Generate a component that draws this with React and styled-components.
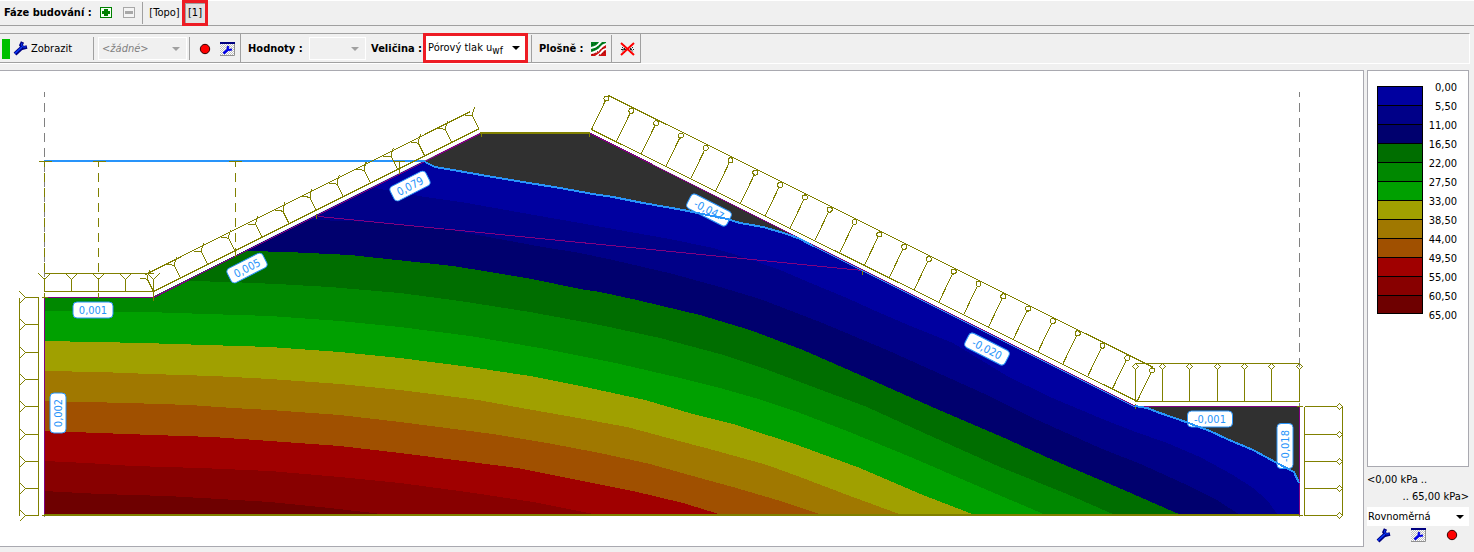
import styled, { createGlobalStyle, css } from 'styled-components'

const GlobalStyle = createGlobalStyle`
  * { box-sizing: border-box; }
  body {
    margin: 0;
    background: #f0f0f0;
    color: #000;
    font-family: "DejaVu Sans Condensed", "DejaVu Sans", "Noto Sans", sans-serif;
    font-size: 11px;
    line-height: 16px;
  }
  button, select { font: inherit; color: inherit; }
`

const OLIVE = '#808000'
const PURPLE = '#800080'
const WATER = '#2894fa'

/* ---------- toolbars ---------- */

const Page = styled.div`
  display: flex;
  flex-direction: column;
`

const StageBar = styled.header`
  display: flex;
  align-items: center;
  height: 26px;
  padding-left: 4px;
  border-top: 1px solid #fff;
  border-bottom: 1px solid #a0a0a0;
`

const ViewBar = styled.div`
  display: flex;
  height: 31px;
  margin: 7px 4px 6px 0;
  border-top: 1px solid #a0a0a0;
  border-right: 1px solid #fff;
  border-bottom: 1px solid #fff;
`

const Group = styled.div`
  display: flex;
  align-items: center;
  padding-top: 1px;
  border-right: 1px solid #a0a0a0;
  border-bottom: 1px solid #a0a0a0;
`

const Caption = styled.label`
  font-weight: bold;
  white-space: nowrap;
  width: ${p => p.$width}px;
`

const Divider = styled.span`
  align-self: stretch;
  width: 1px;
  margin: ${p => p.$margin || '2px 4px'};
  background: #a0a0a0;
`

const ToolButton = styled.button`
  display: flex;
  align-items: center;
  justify-content: center;
  gap: 3px;
  height: 22px;
  padding: 0 ${p => p.$pad || 0}px;
  border: 0;
  background: none;
  white-space: nowrap;
  svg { display: block; flex: none; }
`

const Marked = styled.div`
  display: flex;
  align-self: stretch;
  border: 3px solid #ed1c24;
  ${p => p.$combo && css`margin: -2px 3px -1px 0;`}
  ${p => p.$stage && css`margin: -1px 0;`}
`

const StageButton = styled(ToolButton)`
  height: 20px;
  width: ${p => p.$active ? 20 : 35}px;
  background: ${p => p.$active ? '#e3e3e3' : 'none'};
  box-shadow: ${p => p.$active ? 'inset 1px 1px 0 #a0a0a0' : 'none'};
`

const ActiveMark = styled.span`
  width: 8px;
  height: 20px;
  margin-left: 2px;
  background: #00c000;
`

const Combo = styled.div`
  position: relative;
  display: flex;
  align-items: center;
  width: ${p => p.$width};
  height: ${p => p.$height || 23}px;
  background: ${p => p.$white ? '#fff' : '#f0f0f0'};
  border: ${p => p.$white ? '0' : '1px solid #fff'};
  color: ${p => p.$white ? '#000' : '#808080'};
  svg {
    position: absolute;
    right: ${p => p.$white ? 5 : 6}px;
    pointer-events: none;
  }
`

const Select = styled.select`
  appearance: none;
  width: 100%;
  height: 100%;
  padding: 0 16px 0 ${p => p.$pad || 3}px;
  border: 0;
  background: transparent;
  font-style: ${p => p.$italic ? 'italic' : 'normal'};
  opacity: 1;
`

const ComboText = styled.span`
  position: absolute;
  left: 2px;
  pointer-events: none;
  white-space: nowrap;
  sub { font-size: 10px; line-height: 0; vertical-align: -3px; }
`

/* ---------- work area ---------- */

const Work = styled.main`
  display: grid;
  grid-template-columns: minmax(0, 1fr) 102px;
  gap: 3px;
  padding-right: 5px;
`

const Canvas = styled.section`
  background: #fff;
  border: 1px solid #a9a9b0;
  border-left: 0;
  svg { display: block; width: 100%; height: auto; }
`

const Side = styled.aside`
  display: flex;
  flex-direction: column;
`

const Legend = styled.div`
  flex: 1;
  display: flex;
  justify-content: space-between;
  padding: 7px 11px 0 9px;
  background: #fff;
  border: 1px solid #a9a9b0;
`

const Swatches = styled.div`
  margin-top: 8px;
  width: 46px;
`

const Swatch = styled.div`
  height: 19px;
  border: 1px solid #000;
  border-bottom-width: ${p => p.$last ? 1 : 0}px;
  background: ${p => p.$color};
`

const Values = styled.div`
  text-align: right;
  line-height: 19px;
`

const Range = styled.div`
  padding: 4px 0 2px;
  line-height: 17px;
  white-space: nowrap;
  div + div { text-align: right; }
`

const SideTools = styled.div`
  display: flex;
  justify-content: space-between;
  padding: 1px 11px 4px 9px;
  ${ToolButton} { height: 16px; }
`

/* ---------- icons ---------- */

const Wrench = () => (
  <svg width="15" height="15" viewBox="0 0 15 15">
    <g fill="none">
      <path d="M2 13L9 6.500" stroke="#000080" strokeWidth="4" />
      <path d="M9.500 1L8 4L10 7L14 6" stroke="#000080" strokeWidth="3.500" />
      <path d="M2 12.500L9 6" stroke="#0a3cff" strokeWidth="1.500" />
      <path d="M9 2L8.500 4L10 6L13 6" stroke="#0a3cff" />
    </g>
  </svg>
)

const Setup = () => (
  <svg width="15" height="14" viewBox="0 0 15 14">
    <defs>
      <pattern id="check" width="2" height="2" patternUnits="userSpaceOnUse">
        <rect width="2" height="2" fill="#fff" />
        <rect width="1" height="1" fill="#c0c0c0" />
        <rect x="1" y="1" width="1" height="1" fill="#c0c0c0" />
      </pattern>
    </defs>
    <rect width="15" height="14" fill="url(#check)" />
    <path d="M14.500 2V13.500H0" fill="none" stroke="#909090" />
    <rect width="15" height="2" fill="#000080" />
    <g fill="none" stroke="#0000e8">
      <path d="M3.500 11.500L8 7.500" strokeWidth="2.500" />
      <path d="M8.500 4L7.500 6L9 8L12 7.500" strokeWidth="2" />
    </g>
  </svg>
)

const Dot = () => (
  <svg width="12" height="12" viewBox="0 0 12 12">
    <circle cx="6" cy="6" r="4.700" fill="#f00" stroke="#300" />
  </svg>
)

const Box = ({ color, plus }) => (
  <svg width="12" height="12" viewBox="0 0 12 12" shapeRendering="crispEdges">
    <rect x=".5" y=".5" width="11" height="10" rx="1" fill={plus ? '#f4fff4' : '#f4f4f4'} stroke={color} />
    <path d={plus ? 'M2 4h2V2h4v2h2v3H8v2H4V7H2z' : 'M2 4h8v3H2z'} fill={color} />
  </svg>
)

const Arrow = ({ color = '#000' }) => (
  <svg width="8" height="4" viewBox="0 0 8 4">
    <path d="M0 0h8L4 4z" fill={color} />
  </svg>
)

const Zones = () => (
  <svg width="15" height="14" viewBox="0 0 15 14">
    <rect width="15" height="14" fill="#fff" />
    <path d="M0 0H8Q6 4 0 5z" fill="#008020" />
    <path d="M0 10V7Q5 6 7 4T11 0H15V1Q11 2 9 5T0 10z" fill="#008020" />
    <path d="M0 14V12Q7 11 9 8T15 3V6Q11 7 10 9T4 14z" fill="#d01010" />
    <path d="M7 14Q11 12 12 10T15 8V14z" fill="#d01010" />
    <path d="M1 13L14 5M8 13L14 10" stroke="#600000" strokeDasharray="1 2" />
    <path d="M1 9L12 1M1 3L6 1" stroke="#004000" strokeDasharray="1 2" />
  </svg>
)

const Crossed = () => (
  <svg width="15" height="14" viewBox="0 0 15 14">
    <path d="M1 7.500H14M4.500 3V11M10.500 3V11M2 5L4 7L2 10M13 5L11 7L13 10" stroke="#222" fill="none" strokeDasharray="2 1" />
    <path d="M1 1L14 13M14 1L1 13" stroke="#f00" strokeWidth="2" />
  </svg>
)

/* ---------- cross-section ---------- */

const WATER_TABLE = '425,162 435,167 453,170 487,176 523,182 560,188 593,194 613,197 643,203 683,210 727,219 740,223 763,227 787,234 800,239 813,246'
const SEEPAGE = '813,246 863,271 1135,407'
const WATER_TOE = '1135,406 1147,408 1160,413 1183,421 1210,431 1227,439 1253,450 1277,463 1292,471 1294,472 1299,483'

// upper edge of every pressure zone, from the water table down
const zones = [
  { color: '#0000a0', edge: `44,162 ${WATER_TABLE} ${SEEPAGE} ${WATER_TOE}` },
  { color: '#000088', edge: '44,180 375,188 425,197 467,203 517,212 580,223 630,232 670,239 713,248 740,256 780,270 813,284 847,298 880,313 913,327 953,343 1007,376 1050,397 1100,418 1133,431 1167,443 1200,457 1233,475 1253,488 1267,500 1278,515' },
  { color: '#00006e', edge: '44,222 310,220 350,221 400,224 446,229 483,236 537,246 580,253 613,260 673,274 720,287 760,299 820,322 887,350 927,368 987,395 1033,418 1100,448 1143,465 1187,485 1217,500 1240,515' },
  { color: '#006e00', edge: '44,251 248,251 287,252 330,254 350,255 397,260 453,266 490,272 532,279 580,289 600,292 637,300 700,315 750,330 803,350 867,378 930,406 1000,436 1053,460 1117,487 1181,515' },
  { color: '#008800', edge: '44,281 190,281 230,282 277,284 330,287 400,293 460,301 530,312 600,325 660,338 720,354 760,367 800,382 867,407 933,437 1000,467 1067,494 1115,515' },
  { color: '#00a000', edge: '44,311 147,312 207,314 270,316 340,321 400,327 470,336 540,348 620,364 680,378 720,388 762,400 800,413 847,431 913,458 980,487 1046,515' },
  { color: '#a0a000', edge: '44,341 96,342 143,343 207,345 270,347 340,352 400,358 470,367 530,376 590,388 645,400 693,414 733,424 770,436 800,446 860,468 923,495 975,515' },
  { color: '#a07800', edge: '44,371 100,372 150,374 213,376 270,379 340,384 400,390 440,395 478,400 527,409 567,416 627,427 683,442 717,451 767,465 800,477 850,496 902,515' },
  { color: '#a05000', edge: '44,401 128,403 190,405 233,408 270,410 340,415 400,422 493,434 547,443 600,453 650,464 700,478 733,487 777,500 822,515' },
  { color: '#a00000', edge: '44,431 100,433 153,435 213,437 270,441 340,446 400,453 463,461 517,468 567,478 633,491 683,503 722,515' },
  { color: '#880000', edge: '44,461 87,463 133,466 200,468 270,471 340,477 400,483 467,492 533,502 598,515' },
  { color: '#6e0000', edge: '44,491 100,494 167,496 220,499 270,502 330,508 390,515' },
]

const levels = ['0,00', '5,50', '11,00', '16,50', '22,00', '27,50', '33,00', '38,50', '44,00', '49,50', '55,00', '60,50', '65,00']

const flowLabels = [
  { text: '0,001', x: 93, y: 310, turn: 0 },
  { text: '0,002', x: 58, y: 413, turn: -90 },
  { text: '0,005', x: 247, y: 268, turn: -27 },
  { text: '0,079', x: 410, y: 186, turn: -27 },
  { text: '-0,047', x: 709, y: 210, turn: 27 },
  { text: '-0,020', x: 987, y: 349, turn: 27 },
  { text: '-0,001', x: 1210, y: 419, turn: 0 },
  { text: '-0,018', x: 1285, y: 446, turn: -90 },
]

const FlowText = styled.text`
  fill: ${WATER};
  font-size: 11px;
  text-anchor: middle;
`

const count = n => Array.from({ length: n }, (_, i) => i)

function FlowLabel({ text, x, y, turn }) {
  const w = text.length > 5 ? 45 : 40
  return (
    <g transform={`translate(${x} ${y}) rotate(${turn})`}>
      <rect x={-w / 2} y="-8" width={w} height="16" rx="4" fill="#fff" stroke={WATER} />
      <FlowText y="4">{text}</FlowText>
    </g>
  )
}

// boundary with prescribed head: forked stems
function InflowMarks() {
  const rows = [297, 324, 352, 379, 406, 434, 461, 488, 515]
  const cols = [44, 71, 98, 125, 153]
  return (
    <g>
      <path d="M19 297V515M38 297V515M41 297h6M41 515h6" />
      {rows.map(y => <path key={y} d={`M38 ${y}H25L19 ${y - 6}M25 ${y}L19 ${y + 6}`} />)}
      <path d="M44 273H153M44 291H153V297" />
      {cols.map(x => <path key={x} d={`M${x} 291V279L${x - 6} 273M${x} 279L${x + 6} 273`} />)}
      <path d="M145 274L470 111M153 291L479 128" />
      {count(13).map(i => (
        <path key={i} d={`M${153 + 27.1 * i} ${291 - 13.6 * i}l-6 -12l-3 -1l-5 0M${147 + 27.1 * i} ${279 - 13.6 * i}v-3l2 -6`} />
      ))}
    </g>
  )
}

// seepage boundary: stems ending in rings
function SeepageMarks() {
  const cols = [1135, 1162, 1189, 1217, 1244, 1271, 1299]
  const rows = [406, 434, 461, 488, 515]
  return (
    <g>
      <path d="M591 129L1137 401M608 95L1153 367" />
      {count(23).map(i => {
        const x = 591 + 24.8 * i
        const y = 129 + 12.36 * i
        return (
          <g key={i}>
            <path d={`M${x} ${y}l14 -29`} />
            <circle cx={x + 15} cy={y - 31} r="2.500" />
          </g>
        )
      })}
      <path d="M1135 363H1299M1135 401H1299" />
      {cols.map(x => <path key={x} d={`M${x} 401V369l-3 -3l3 -3l3 3l-3 3`} />)}
      <path d="M1304 406V515M1342 406V515M1296 406h6M1296 515h6" />
      {rows.map(y => <path key={y} d={`M1304 ${y}H1336l3 -3l3 3l-3 3l-3 -3`} />)}
    </g>
  )
}

function CrossSection() {
  return (
    <svg viewBox="0 71 1363 475" role="img" aria-label="Pórový tlak">
      <clipPath id="soil">
        <path d="M44 297H153L480 133H590L1135 406H1299V515H44z" />
      </clipPath>
      <g clipPath="url(#soil)" shapeRendering="crispEdges">
        <rect x="44" y="130" width="1256" height="386" fill="#303030" />
        {zones.map(z => (
          <polygon key={z.color} points={`${z.edge} 1299,515 44,515`} fill={z.color} />
        ))}
      </g>

      <g transform="translate(.5 .5)" fill="none" shapeRendering="crispEdges">
        <path d="M44 91V518M1299 91V518" stroke="#808080" strokeDasharray="9 6" strokeDashoffset="4" />
        <path d="M318 216L862 270" stroke={PURPLE} />
        <path d="M44 515V297H153L480 133M590 133L1135 406H1299V515" stroke={PURPLE} />
      </g>
      <g fill="none" strokeWidth="2" shapeRendering="crispEdges">
        <path d="M44 161H425" stroke={WATER} />
        <path d="M480 133H590M44 515H1299" stroke={OLIVE} />
      </g>
      <g transform="translate(.5 .5)" fill="none" stroke={OLIVE} shapeRendering="crispEdges">
        <path d="M44 161V297M98 161V297M235 161V257" strokeDasharray="9 6" strokeDashoffset="4" />
        <path d="M38 161h13M92 161h13M228 161h13M392 161h12M399 161v8" />
        <path d="M153 296v4M316 213v5M399 167v6M481 133v3M589 133v3M862 269v5M1135 403v5" />
        <InflowMarks />
        <SeepageMarks />
      </g>

      {flowLabels.map(l => <FlowLabel key={l.text} {...l} />)}

      <g fill="none" stroke={WATER} shapeRendering="crispEdges">
        <polyline points={WATER_TABLE} strokeWidth="2" />
        <polyline points={SEEPAGE} />
        <polyline points={WATER_TOE} strokeWidth="2" />
      </g>
    </svg>
  )
}

function App() {
  return (
    <Page>
      <GlobalStyle />
      <StageBar>
        <Caption as="span" $width={96}>Fáze budování :</Caption>
        <ToolButton aria-label="Přidat fázi"><Box color="#008000" plus /></ToolButton>
        <ToolButton aria-label="Odebrat fázi" $pad={11}><Box color="#a8a8a8" /></ToolButton>
        <Divider $margin="1px 4px 1px -4px" />
        <StageButton>[Topo]</StageButton>
        <Marked $stage><StageButton $active>[1]</StageButton></Marked>
      </StageBar>

      <ViewBar>
        <Group>
          <ActiveMark />
          <ToolButton $pad={3}><Wrench />Zobrazit</ToolButton>
          <Divider $margin="2px 4px 2px 18px" />
          <Combo $width="89px">
            <Select $italic disabled aria-label="Zobrazení" defaultValue="none">
              <option value="none">&lt;žádné&gt;</option>
            </Select>
            <Arrow color="#a0a0a0" />
          </Combo>
          <Divider $margin="2px 6px 2px 2px" />
          <ToolButton aria-label="Uložit pohled" $pad={3}><Dot /></ToolButton>
          <ToolButton aria-label="Nastavení pohledů" $pad={6}><Setup /></ToolButton>
          <Divider $margin="-1px 7px 0 -1px" />
          <Caption htmlFor="values" $width={61}>Hodnoty :</Caption>
          <Combo $width="57px">
            <Select id="values" disabled><option aria-label="žádné" /></Select>
            <Arrow color="#a0a0a0" />
          </Combo>
          <Caption htmlFor="quantity" $width={57} style={undefined}><Gap />Veličina :</Caption>
          <Marked $combo>
            <Combo $white $width="99px" $height={24}>
              <Select id="quantity"><option value="uwf" aria-label="Pórový tlak uwf" /></Select>
              <ComboText aria-hidden="true">Pórový tlak u<sub>wf</sub></ComboText>
              <Arrow />
            </Combo>
          </Marked>
          <Divider $margin="0 7px 0 0" />
          <Caption as="span" $width={47}>Plošně :</Caption>
          <ToolButton aria-label="Izoplochy" $pad={5}><Zones /></ToolButton>
          <Divider $margin="0 3px 0 0" />
          <ToolButton aria-label="Bez vykreslení" $pad={5}><Crossed /></ToolButton>
        </Group>
      </ViewBar>

      <Work>
        <Canvas><CrossSection /></Canvas>
        <Side>
          <Legend>
            <Swatches>
              {zones.map((z, i) => <Swatch key={z.color} $color={z.color} $last={i === zones.length - 1} />)}
            </Swatches>
            <Values>
              {levels.map(v => <div key={v}>{v}</div>)}
            </Values>
          </Legend>
          <Range>
            <div>&lt;0,00 kPa ..</div>
            <div>.. 65,00 kPa&gt;</div>
          </Range>
          <Combo $white $width="100%" $height={19}>
            <Select $pad={1} aria-label="Stupnice" defaultValue="even">
              <option value="even">Rovnoměrná</option>
            </Select>
            <Arrow />
          </Combo>
          <SideTools>
            <ToolButton aria-label="Nastavení stupnice"><Wrench /></ToolButton>
            <ToolButton aria-label="Správce stupnic"><Setup /></ToolButton>
            <ToolButton aria-label="Uložit stupnici"><Dot /></ToolButton>
          </SideTools>
        </Side>
      </Work>
    </Page>
  )
}

const Gap = styled.span`
  display: inline-block;
  width: 5px;
`

export default App
